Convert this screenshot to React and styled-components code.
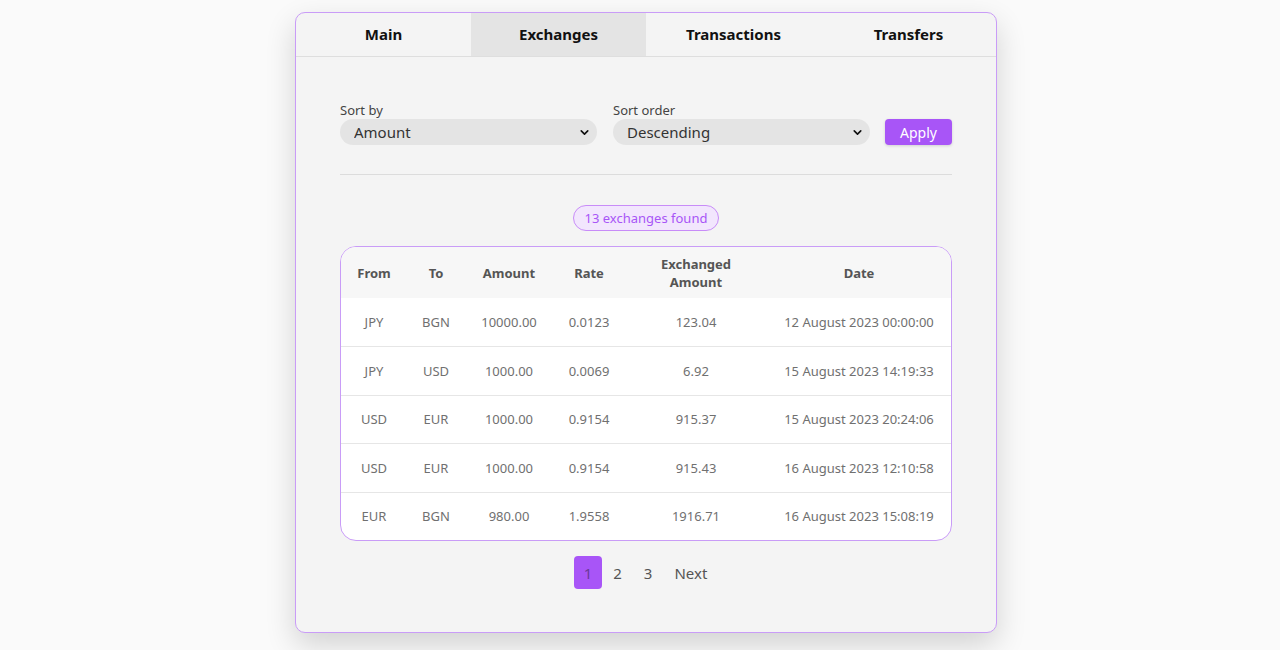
import styled, { createGlobalStyle } from 'styled-components';
import { ChevronDown } from 'lucide-react';

const GlobalStyle = createGlobalStyle`
  body {
    margin: 0;
    background: #fafafa;
    font-family: 'Noto Sans', 'Liberation Sans', sans-serif;
  }
`;

const Page = styled.div`
  display: flex;
  justify-content: center;
  padding: 12px 0 0 12px;
  min-height: 650px;
  box-sizing: border-box;
`;

const Card = styled.div`
  width: 702px;
  height: 621px;
  box-sizing: border-box;
  background: #f4f4f4;
  border: 1px solid #c99cf7;
  border-radius: 10px;
  box-shadow: 0 12px 30px rgba(0, 0, 0, 0.16);
  overflow: hidden;
  display: flex;
  flex-direction: column;
`;

const Tabs = styled.div`
  display: grid;
  grid-template-columns: repeat(4, 1fr);
  border-bottom: 1px solid #dedede;
`;

const Tab = styled.div`
  height: 43px;
  padding-bottom: 1px;
  box-sizing: border-box;
  display: flex;
  align-items: center;
  justify-content: center;
  font-size: 15px;
  font-weight: 700;
  color: #111;
  background: ${(p) => (p.$active ? '#e4e4e4' : 'transparent')};
`;

const Content = styled.div`
  padding: 45px 44px 0;
  display: flex;
  flex-direction: column;
`;

const Filters = styled.div`
  display: flex;
  align-items: flex-end;
  gap: 16px;
`;

const Field = styled.label`
  display: flex;
  flex-direction: column;
  font-size: 13px;
  color: #444;
  line-height: 17px;
`;

const SelectWrap = styled.div`
  position: relative;
  width: 257px;
`;

const Select = styled.select`
  appearance: none;
  width: 100%;
  height: 26px;
  border: none;
  border-radius: 13px;
  background: #e4e4e4;
  padding: 0 14px;
  font-family: inherit;
  font-size: 15px;
  color: #333;
  outline: none;
`;

const Chevron = styled(ChevronDown)`
  position: absolute;
  right: 6px;
  top: 7px;
  pointer-events: none;
  color: #111;
`;

const ApplyButton = styled.button`
  height: 26px;
  width: 67px;
  border: none;
  border-radius: 4px;
  background: #a855f7;
  color: #fff;
  font-family: inherit;
  font-size: 14px;
  box-shadow: 0 1px 3px rgba(0, 0, 0, 0.15);
  margin-left: -1px;
`;

const Divider = styled.hr`
  border: none;
  border-top: 1px solid #dcdcdc;
  margin: 29px 0 30px;
  width: 100%;
`;

const Badge = styled.div`
  align-self: center;
  height: 26px;
  box-sizing: border-box;
  padding: 0 11px;
  display: flex;
  align-items: center;
  border: 1px solid #c88cf8;
  border-radius: 13px;
  background: #f2e6fd;
  color: #a855f7;
  font-size: 13px;
`;

const TableBox = styled.div`
  margin-top: 15px;
  border: 1px solid #c99cf7;
  border-radius: 16px;
  overflow: hidden;
  background: #fff;
`;

const Table = styled.table`
  width: 100%;
  border-collapse: collapse;
  table-layout: fixed;
`;

const Th = styled.th`
  height: 51px;
  background: #f7f7f7;
  font-size: 13px;
  font-weight: 700;
  color: #555;
  line-height: 18px;
  padding: 0;
  width: ${(p) => p.$w}px;
`;

const Td = styled.td`
  height: 48px;
  text-align: center;
  font-size: 13px;
  color: #707070;
  padding: 0;
  white-space: nowrap;
`;

const Row = styled.tr`
  & + & td {
    height: 47.5px;
    border-top: 1px solid #e6e6e6;
  }
`;

const Pager = styled.div`
  display: flex;
  justify-content: center;
  margin-top: 15px;
`;

const PageLink = styled.span`
  height: 33px;
  display: flex;
  align-items: center;
  padding: 0 ${(p) => (p.$active ? 10 : 11)}px;
  border-radius: 4px;
  font-size: 15px;
  color: ${(p) => (p.$active ? '#6b3a9a' : '#555')};
  background: ${(p) => (p.$active ? '#a855f7' : 'transparent')};
`;

const columns = [
  ['From', 66],
  ['To', 58],
  ['Amount', 88],
  ['Rate', 72],
  ['Exchanged Amount', 142],
  ['Date', 184],
];

const rows = [
  ['JPY', 'BGN', '10000.00', '0.0123', '123.04', '12 August 2023 00:00:00'],
  ['JPY', 'USD', '1000.00', '0.0069', '6.92', '15 August 2023 14:19:33'],
  ['USD', 'EUR', '1000.00', '0.9154', '915.37', '15 August 2023 20:24:06'],
  ['USD', 'EUR', '1000.00', '0.9154', '915.43', '16 August 2023 12:10:58'],
  ['EUR', 'BGN', '980.00', '1.9558', '1916.71', '16 August 2023 15:08:19'],
];

const App = () => {
  return (
    <Page>
      <GlobalStyle />
      <Card>
        <Tabs>
          <Tab>Main</Tab>
          <Tab $active>Exchanges</Tab>
          <Tab>Transactions</Tab>
          <Tab>Transfers</Tab>
        </Tabs>
        <Content>
          <Filters>
            <Field>
              Sort by
              <SelectWrap>
                <Select defaultValue="amount">
                  <option value="amount">Amount</option>
                  <option value="date">Date</option>
                </Select>
                <Chevron size={13} strokeWidth={3} />
              </SelectWrap>
            </Field>
            <Field>
              Sort order
              <SelectWrap>
                <Select defaultValue="desc">
                  <option value="desc">Descending</option>
                  <option value="asc">Ascending</option>
                </Select>
                <Chevron size={13} strokeWidth={3} />
              </SelectWrap>
            </Field>
            <ApplyButton>Apply</ApplyButton>
          </Filters>
          <Divider />
          <Badge>13 exchanges found</Badge>
          <TableBox>
            <Table>
              <thead>
                <tr>
                  {columns.map(([name, w]) => (
                    <Th key={name} $w={w}>
                      {name === 'Exchanged Amount' ? (
                        <>Exchanged<br />Amount</>
                      ) : (
                        name
                      )}
                    </Th>
                  ))}
                </tr>
              </thead>
              <tbody>
                {rows.map((r, i) => (
                  <Row key={i}>
                    {r.map((c, j) => (
                      <Td key={j}>{c}</Td>
                    ))}
                  </Row>
                ))}
              </tbody>
            </Table>
          </TableBox>
          <Pager>
            <PageLink $active>1</PageLink>
            <PageLink>2</PageLink>
            <PageLink>3</PageLink>
            <PageLink>Next</PageLink>
          </Pager>
        </Content>
      </Card>
    </Page>
  );
};

export default App;
